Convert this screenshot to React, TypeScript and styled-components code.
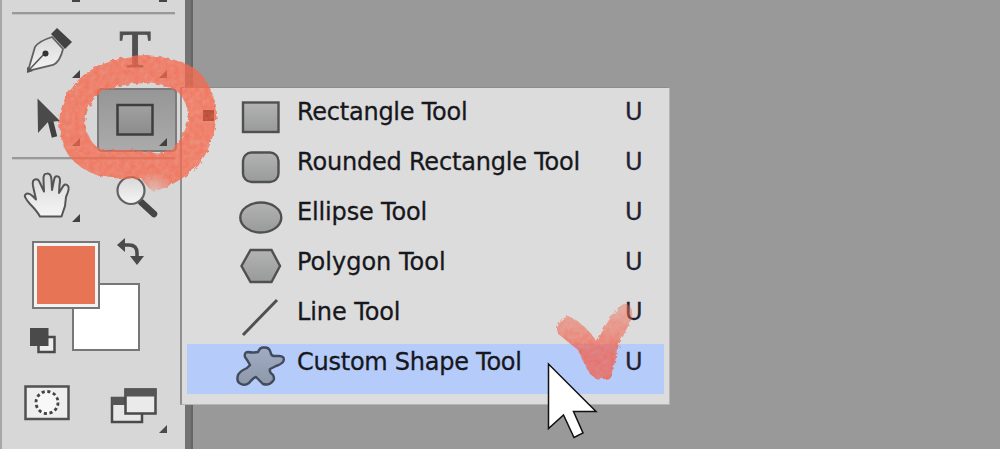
import React from "react";
import styled, { createGlobalStyle } from "styled-components";

interface MenuItem {
  label: string;
  shortcut: string;
  icon: React.ReactNode;
  spacing: number;
  current?: boolean;
  active?: boolean;
}

const INK = "#4a4a4a";

const Corner = ({ x = 60 }: { x?: number }) => (
  <path d={`M${x + 8} 50v8h-8z`} fill="#414141" />
);

const PenIcon = () => (
  <svg width="80" height="64" viewBox="0 0 80 64">
    <path d="M16 51L23 27Q27 21 40 17L51 29Q48 42 41 45Z" fill="url(#paper)" stroke="#626262" strokeWidth="1.8" />
    <path d="M17 50L33 33" stroke="#555" strokeWidth="1.5" />
    <circle cx="33.5" cy="33.5" r="3" fill="#333" />
    <path d="M15 47l6 4-6 2z" fill="#555" />
    <path d="M45 8L60 22L53 29L39 14Z" fill="#424242" />
    <Corner />
  </svg>
);

const TypeIcon = () => (
  <svg width="80" height="64" viewBox="0 0 80 64">
    <text x="38.2" y="47" textAnchor="middle" fontFamily="'Liberation Serif', serif" fontSize="52" fill="#505050" stroke="#505050" strokeWidth=".9">T</text>
    <Corner x={62} />
  </svg>
);

const ArrowIcon = () => (
  <svg width="80" height="64" viewBox="0 0 80 64">
    <path d="M38 31L42.500 49" stroke="#414141" strokeWidth="5.500" />
    <path d="M25.500 10.500L48 33L36 34L26 45Z" fill="#4a4a4a" />
    <Corner />
  </svg>
);

const ShapeIcon = () => (
  <svg width="80" height="64" viewBox="0 0 80 64">
    <rect x="20.500" y="17" width="35" height="29.500" fill="url(#darkShade)" stroke="#3e3e3e" strokeWidth="2.500" />
    <Corner x={62} />
  </svg>
);

const HandIcon = () => (
  <svg width="80" height="64" viewBox="0 0 80 64">
    <path
      d="M28 52.500Q25 47 18 40Q11 32 13.500 30.500Q16 28 20.500 32L24 35.500L21 22Q20 16 23 15.500Q26 14 28 19L32 27.500L31.500 16Q31 9.500 35 9.500Q39 9 39.500 16L40 26L42 16Q43 11 46 12.500Q49 13 47.500 21L47 29L50 24Q53 18 56 22Q58 24 54 33L53 42L49.500 52.500Z"
      fill="url(#paper)" stroke="#555" strokeWidth="2" strokeLinejoin="round"
    />
    <Corner />
  </svg>
);

const ZoomIcon = () => (
  <svg width="80" height="64" viewBox="0 0 80 64">
    <path d="M44 38L57 50" stroke="#454545" strokeWidth="6.500" strokeLinecap="round" />
    <circle cx="34" cy="26.500" r="13.500" fill="url(#paper)" stroke="#626262" strokeWidth="2.200" />
  </svg>
);

const Defs = () => (
  <HiddenSvg width="0" height="0">
    <defs>
      <linearGradient id="paper" x2="0" y2="1">
        <stop stopColor="#d8d8d8" />
        <stop offset="1" stopColor="#f5f5f5" />
      </linearGradient>
      <linearGradient id="shade" x2="0" y2="1">
        <stop stopColor="#b3b3b3" />
        <stop offset="1" stopColor="#999a9b" />
      </linearGradient>
      <linearGradient id="darkShade" x2="0" y2="1">
        <stop stopColor="#a0a0a0" />
        <stop offset="1" stopColor="#8c8c8c" />
      </linearGradient>
      <linearGradient id="blueShade" x2="0" y2="1">
        <stop stopColor="#a0acc4" />
        <stop offset="1" stopColor="#8e98aa" />
      </linearGradient>
    </defs>
  </HiddenSvg>
);

const items: MenuItem[] = [
  {
    label: "Rectangle Tool", shortcut: "U", spacing: -0.25, current: true,
    icon: <rect x="8" y="8.500" width="35.500" height="29.500" />,
  },
  {
    label: "Rounded Rectangle Tool", shortcut: "U", spacing: -0.2,
    icon: <rect x="8" y="8.500" width="35.500" height="29.500" rx="8.500" />,
  },
  {
    label: "Ellipse Tool", shortcut: "U", spacing: -0.15,
    icon: <ellipse cx="25.800" cy="23.500" rx="20.500" ry="15" />,
  },
  {
    label: "Polygon Tool", shortcut: "U", spacing: 0,
    icon: <path d="M15.500 6H36.500L45 22L36.500 38H15.500L6.500 22Z" />,
  },
  {
    label: "Line Tool", shortcut: "U", spacing: -0.1,
    icon: <path d="M8 41L42 6" strokeWidth="3" />,
  },
  {
    label: "Custom Shape Tool", shortcut: "U", spacing: -0.25, active: true,
    icon: (
      <path d="M10 13Q9 8 13 8Q18 9 23 8Q25 3 29 3.500Q34 3 35.500 8Q36 12 39 12H44Q50 12 48.500 17Q47 20 41 22L35 25Q34 28 38 31Q40 35 38 37Q34 42 28 40L21 33Q18 34 14 39Q10 42 6 40Q1 38 3 31Q5 27 12 24L15 21Q13 17 10 13Z" />
    ),
  },
];

const App = () => (
  <>
    <Global />
    <Defs />
    <Screen>
      <Toolbar>
        <Overflow>
          <Stub />
          <Stub />
        </Overflow>
        <Divider />
        <Tools $top={5}>
          <Tool><PenIcon /></Tool>
          <Tool><TypeIcon /></Tool>
          <Tool><ArrowIcon /></Tool>
          <Tool $selected><ShapeIcon /></Tool>
        </Tools>
        <Divider $top={5} />
        <Tools $top={4}>
          <Tool><HandIcon /></Tool>
          <Tool><ZoomIcon /></Tool>
        </Tools>
        <Colors>
          <Swatch $color="#fff" $area="2 / 2 / 4 / 4" />
          <Swatch $color="#e77455" $area="1 / 1 / 3 / 3" $inset />
          <SwapIcon width="30" height="30" viewBox="0 0 30 30">
            <path d="M8 8H13Q21 8 21 16V22" fill="none" stroke={INK} strokeWidth="3.500" />
            <path d="M1 8L9 1V15ZM14 19H28L21 28Z" fill={INK} />
          </SwapIcon>
          <ResetIcon width="28" height="28" viewBox="0 0 28 28">
            <rect x="9.500" y="10" width="16" height="15" fill="#ededed" stroke={INK} strokeWidth="2.500" />
            <rect x="1" y="1" width="18.500" height="18" fill={INK} />
          </ResetIcon>
        </Colors>
        <Modes>
          <svg width="46" height="36" viewBox="0 0 46 36">
            <rect x="1.500" y="1.500" width="43" height="32.500" fill="#eee" stroke="#525252" strokeWidth="2.500" />
            <circle cx="23" cy="17.500" r="11" fill="#f8f8f8" stroke="#444" strokeWidth="2.800" strokeDasharray="3.100 2.660" />
          </svg>
          <svg width="60" height="48" viewBox="0 0 60 48">
            <rect x="2" y="11" width="30" height="24" fill="#e7e7e7" stroke={INK} strokeWidth="2.500" />
            <path d="M1.500 10h15v8h-15z" fill="#555" />
            <rect x="15.500" y="2.500" width="30" height="24" fill="#eaeaea" stroke={INK} strokeWidth="2.500" />
            <path d="M14.500 1.500h32v8h-32z" fill="#555" />
            <path d="M57 38v8h-8z" fill={INK} />
          </svg>
        </Modes>
      </Toolbar>
      <Gutter />
      <Canvas />
      <Menu>
        {items.map((item) => (
          <Row key={item.label} $active={item.active}>
            <Mark $on={item.current} />
            <Glyph width="52" height="44" viewBox="0 0 52 44" $active={item.active}>
              {item.icon}
            </Glyph>
            <Label $spacing={item.spacing}>{item.label}</Label>
            <Shortcut>{item.shortcut}</Shortcut>
          </Row>
        ))}
      </Menu>
      <Overlay width="1000" height="449" viewBox="0 0 1000 449">
        <defs>
          <filter id="chalk" x="-10%" y="-10%" width="120%" height="120%">
            <feTurbulence type="fractalNoise" baseFrequency=".2" numOctaves="2" seed="4" result="noise" />
            <feDisplacementMap in="SourceGraphic" in2="noise" scale="5" result="rough" />
            <feColorMatrix in="noise" type="matrix" values="0 0 0 0 1  0 0 0 0 1  0 0 0 0 1  .35 0 0 0 .68" result="grain" />
            <feComposite in="rough" in2="grain" operator="in" />
            <feGaussianBlur stdDeviation=".5" />
          </filter>
          <radialGradient id="ringFade" gradientUnits="userSpaceOnUse" cx="154" cy="192" r="20">
            <stop stopColor="#f5694e" stopOpacity=".25" />
            <stop offset="1" stopColor="#f5694e" stopOpacity=".9" />
          </radialGradient>
          <linearGradient id="tickFade" gradientUnits="userSpaceOnUse" x1="600" y1="308" x2="600" y2="352">
            <stop stopColor="#f0694f" stopOpacity=".5" />
            <stop offset="1" stopColor="#f0614f" stopOpacity=".88" />
          </linearGradient>
        </defs>
        <path
          filter="url(#chalk)" fill="url(#ringFade)" fillRule="evenodd"
          d="M59 123Q60 101 72 88Q83 71 106 63Q125 55 147 55Q174 57 196 69Q214 86 217 113Q215 143 198 166Q181 181 166 187L154 192Q148 189 141 178Q119 180 99 176Q79 169 69 156Q60 143 59 123ZM85 124Q86 104 100 93Q119 83 146 83Q167 84 179 93Q189 105 188 119Q186 136 171 150Q161 156 151 152Q125 149 101 150Q88 142 85 124Z"
        />
        <path
          filter="url(#chalk)" fill="url(#tickFade)"
          d="M556 327Q558 318 569 317Q585 323 597 342Q607 320 621 304Q634 302 632 318Q624 334 617 349Q615 369 609 378Q597 382 590 374L578 350L557 333Z"
        />
        <path
          d="M548.500 364V428.500L563.500 415L574 437.500L583 433L573.500 411.500H596Z"
          fill="#fff" stroke="#111" strokeWidth="1.500"
        />
      </Overlay>
    </Screen>
  </>
);

const Global = createGlobalStyle`
  body {
    margin: 0;
    overflow: hidden;
  }
  * {
    box-sizing: border-box;
  }
  svg {
    display: block;
  }
`;

const HiddenSvg = styled.svg`
  position: absolute;
`;

const Screen = styled.div`
  position: relative;
  display: flex;
  width: 1000px;
  height: 449px;
  overflow: hidden;
`;

const Toolbar = styled.div`
  flex: none;
  width: 185px;
  padding-left: 10px;
  background-color: #d7d7d7;
  border-left: 2px solid #a7a7a7;
`;

const Gutter = styled.div`
  width: 8px;
  background: linear-gradient(90deg, #737373 70%, #666 70%);
`;

const Canvas = styled.div`
  flex: 1;
  background-color: #999;
`;

const Overflow = styled.div`
  display: flex;
  gap: 79px;
  height: 12px;
  padding-left: 60px;
`;

const Stub = styled.div`
  width: 8px;
  height: 2px;
  background-color: #444;
`;

const Divider = styled.div<{ $top?: number }>`
  width: 163px;
  height: 3px;
  margin-top: ${({ $top = 0 }) => $top}px;
  background-color: #999;
  border-bottom: 1px solid #c2c2c2;
`;

const Tools = styled.div<{ $top: number }>`
  display: grid;
  grid-template-columns: 80px 80px;
  grid-auto-rows: 64px;
  gap: 4px 5px;
  margin-top: ${({ $top }) => $top}px;
`;

const Tool = styled.div<{ $selected?: boolean }>`
  border-radius: 5px;
  ${({ $selected }) => $selected && `
    background: linear-gradient(#969696, #ababab);
    box-shadow: inset 0 0 0 2px #7b7b7b;
  `}
`;

const Colors = styled.div`
  display: grid;
  grid-template-columns: 40px 28px 40px;
  grid-template-rows: 42px 26px 42px;
  margin: 13px 0 0 20px;
`;

const Swatch = styled.div<{ $color: string; $area: string; $inset?: boolean }>`
  grid-area: ${({ $area }) => $area};
  background-color: ${({ $color }) => $color};
  border: 2px solid #777;
  box-shadow: ${({ $inset }) => ($inset ? "inset 0 0 0 3px #f3f3f3" : "none")};
`;

const SwapIcon = styled.svg`
  grid-area: 1 / 3;
  margin: -4px 0 0 16px;
`;

const ResetIcon = styled.svg`
  grid-area: 3 / 1;
  margin: 18px 0 0 -3px;
`;

const Modes = styled.div`
  display: flex;
  align-items: flex-start;
  gap: 40px;
  padding: 34px 0 0 12px;

  svg:last-child {
    margin-top: 2px;
  }
`;

const Menu = styled.div`
  position: absolute;
  left: 180px;
  top: 87px;
  width: 490px;
  height: 318px;
  padding: 6px 5px;
  background-color: #dcdcdc;
  border: 1px solid #b5b5b5;
  border-left: 2px solid #8f8f8f;
  border-top-color: #8d8d8d;
`;

const Row = styled.div<{ $active?: boolean }>`
  display: flex;
  width: 477px;
  height: 50px;
  background-color: ${({ $active }) => ($active ? "#b5cbf9" : "transparent")};
`;

const Mark = styled.div<{ $on?: boolean }>`
  width: 11px;
  height: 11px;
  margin: 16px 13px 0 16px;
  background-color: ${({ $on }) => ($on ? "#111" : "transparent")};
`;

const Glyph = styled.svg<{ $active?: boolean }>`
  margin-left: 8px;
  fill: ${({ $active }) => ($active ? "url(#blueShade)" : "url(#shade)")};
  stroke: ${({ $active }) => ($active ? "#424b5c" : "#505050")};
  stroke-width: 2.400px;
`;

const Label = styled.span<{ $spacing: number }>`
  flex: 1;
  margin-left: 10px;
  font: 24px/37px "DejaVu Sans", sans-serif;
  letter-spacing: ${({ $spacing }) => $spacing}px;
  white-space: nowrap;
  color: #17171c;
  -webkit-text-stroke: 0.3px #17171c;
`;

const Shortcut = styled.span`
  width: 39px;
  font: 24px/37px "DejaVu Sans", sans-serif;
  color: #222233;
  -webkit-text-stroke: 0.3px #222233;
`;

const Overlay = styled.svg`
  position: absolute;
  left: 0;
  top: 0;
  pointer-events: none;
`;

export default App;
